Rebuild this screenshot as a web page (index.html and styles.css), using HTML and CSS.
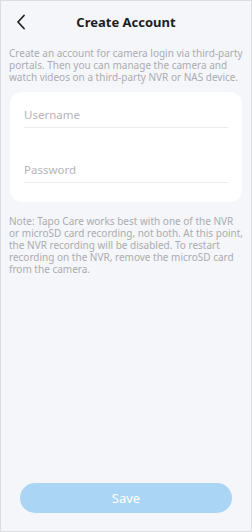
FILE: index.html
```html
<!DOCTYPE html>
<html lang="en">
<head>
    <meta charset="UTF-8">
    <meta name="viewport" content="width=device-width, initial-scale=1.0">
    <title>Create Account</title>
    <link rel="stylesheet" href="styles.css">
</head>
<body>
    <div class="screen">
        <div class="header">
            <svg class="back" width="10" height="16" viewBox="0 0 10 16">
                <path d="M8 1.5 L2 8 L8 14.5" fill="none" stroke="#222" stroke-width="1.8" stroke-linecap="round" stroke-linejoin="round"/>
            </svg>
            <h1>Create Account</h1>
        </div>
        <p class="intro">Create an account for camera login via third-party portals. Then you can manage the camera and watch videos on a third-party NVR or NAS device.</p>
        <div class="card">
            <div class="field">Username</div>
            <div class="field">Password</div>
        </div>
        <p class="note">Note: Tapo Care works best with one of the NVR or microSD card recording, not both. At this point, the NVR recording will be disabled. To restart recording on the NVR, remove the microSD card from the camera.</p>
        <div class="footer">
            <button class="save">Save</button>
        </div>
    </div>
</body>
</html>
```
FILE: styles.css
```css
html, body {
    margin: 0;
    padding: 0;
}
body {
    font-family: "Noto Sans", "Liberation Sans", sans-serif;
    background-color: #fff;
}
.screen {
    box-sizing: border-box;
    width: 252px;
    height: 532px;
    border: 1px solid #dcdde0;
    background-color: #f5f6fa;
    display: flex;
    flex-direction: column;
}
.header {
    height: 42px;
    display: flex;
    align-items: center;
    justify-content: center;
    position: relative;
}
.back {
    position: absolute;
    left: 15px;
    top: 13px;
}
.header h1 {
    margin: 0;
    font-size: 13px;
    font-weight: bold;
    color: #1d1d1f;
}
.intro, .note {
    margin: 0;
    padding: 0 8px;
    font-size: 10px;
    line-height: 12px;
    color: #abacb0;
}
.intro {
    margin-top: 4px;
}
.card {
    margin: 9px 9px 0;
    background-color: #fff;
    border-radius: 12px;
    padding: 1px 14px 19px;
}
.field {
    padding: 15px 0 6px;
    line-height: 13px;
    border-bottom: 1px solid #ebecee;
    font-size: 11.5px;
    color: #b4b5b8;
}
.field + .field {
    margin-top: 20px;
}
.note {
    margin-top: 13px;
}
.footer {
    margin-top: auto;
    padding: 0 19px 18px;
}
.save {
    width: 100%;
    height: 30px;
    border: none;
    border-radius: 15px;
    background-color: #abd5f4;
    color: #fff;
    font-family: "Noto Sans", "Liberation Sans", sans-serif;
    font-size: 13px;
}
```
